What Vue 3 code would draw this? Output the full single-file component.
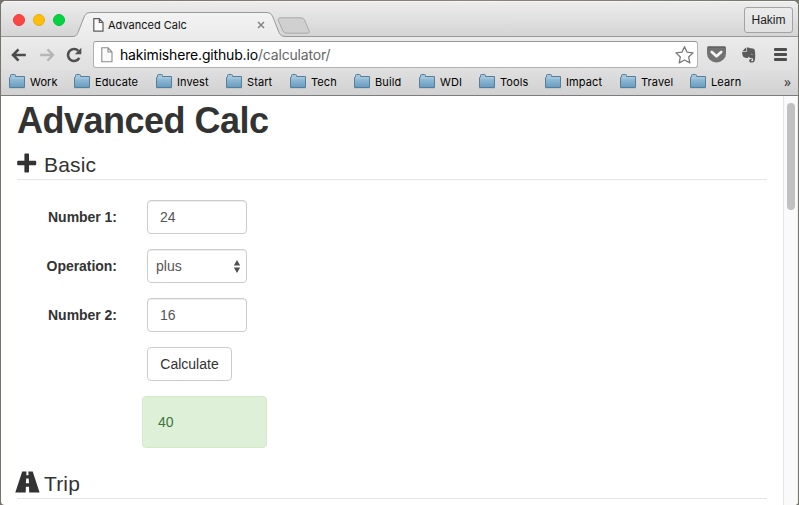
<script setup>
import { ref } from 'vue'

const bookmarks = [
  { name: 'Work', width: 65 },
  { name: 'Educate', width: 82 },
  { name: 'Invest', width: 70 },
  { name: 'Start', width: 64 },
  { name: 'Tech', width: 64 },
  { name: 'Build', width: 65 },
  { name: 'WDI', width: 60 },
  { name: 'Tools', width: 66 },
  { name: 'Impact', width: 75 },
  { name: 'Travel', width: 70 },
  { name: 'Learn', width: 60 },
]

const first = ref('24')
const second = ref('16')
const result = ref(40)

function calculate() {
  result.value = Number(first.value) + Number(second.value)
}
</script>

<template>
  <div class="desktop">
    <div class="window">
      <header class="strip">
        <div class="lights">
          <span class="light red"></span>
          <span class="light yellow"></span>
          <span class="light green"></span>
        </div>
        <div class="tab">
          <svg class="tab-shape" width="214" height="26" viewBox="0 0 214 26">
            <defs>
              <linearGradient id="tabfill" x1="0" y1="0" x2="0" y2="1">
                <stop offset="0" stop-color="#f3f3f3" />
                <stop offset="1" stop-color="#ebebeb" />
              </linearGradient>
            </defs>
            <path d="M0 26V24.500C4 24.500 5 23 6 20.500L12.500 4Q14 .5 18 .5H195Q199 .5 200.500 4L207 20.500C208 23 210 24.500 213 24.500V26Z" fill="url(#tabfill)" />
            <path d="M0 24.500C4 24.500 5 23 6 20.500L12.500 4Q14 .5 18 .5H195Q199 .5 200.500 4L207 20.500C208 23 210 24.500 213 24.500" fill="none" stroke="#999" />
          </svg>
          <svg class="tab-page" width="11" height="14" viewBox="0 0 11 14">
            <path d="M.8.700H6.300L10 4.400V13.200H.8ZM6.300.7V4.500H10" fill="#fafafa" stroke="#5c5c5c" stroke-width="1.200" />
          </svg>
          <span class="tab-title">Advanced Calc</span>
          <svg class="tab-close" width="8" height="8" viewBox="0 0 8 8">
            <path d="M1 1L7 7M7 1L1 7" stroke="#858585" stroke-width="1.500" />
          </svg>
        </div>
        <svg class="new-tab" width="34" height="18" viewBox="0 0 34 18">
          <path d="M4 .8H24Q26.500.8 27.500 3L32 13.500Q33 16.200 30.500 16.200H9.500Q7 16.200 6 14L1.300 3.500Q.5.8 4 .8Z" fill="#d0d0d0" stroke="#a8a8a8" />
        </svg>
        <button class="profile">Hakim</button>
      </header>

      <div class="toolbar">
        <svg class="nav back" width="16" height="14" viewBox="0 0 16 14">
          <path d="M7.500 1.300L2 7L7.500 12.700M2.300 7H14.800" fill="none" stroke="#4c4c4c" stroke-width="2.600" />
        </svg>
        <svg class="nav forward" width="16" height="14" viewBox="0 0 16 14">
          <path d="M8.500 1.300L14 7L8.500 12.700M13.700 7H1.200" fill="none" stroke="#b6b6b6" stroke-width="2.400" />
        </svg>
        <svg class="nav reload" width="16" height="16" viewBox="0 0 16 16">
          <path d="M12.300 3.800A6 6 0 1 0 13.300 10.800" fill="none" stroke="#505050" stroke-width="2.600" />
          <path d="M15.300.8V7.300H8.800Z" fill="#505050" />
        </svg>
        <div class="address">
          <svg class="url-page" width="12" height="16" viewBox="0 0 12 16">
            <path d="M.8.800H7L11 5V14.800H.8ZM7 .8V5H11" fill="#fafafa" stroke="#8b8b8b" stroke-width="1.100" />
          </svg>
          <span class="url">hakimishere.github.io<span>/calculator/</span></span>
          <svg class="star" width="19" height="18" viewBox="0 0 19 18">
            <path d="M9.500 .8L12.100 6.200L18 6.900L13.700 11L14.800 16.900L9.500 14L4.200 16.900L5.300 11L1 6.900L6.900 6.200Z" fill="#fff" stroke="#777" stroke-width="1.300" stroke-linejoin="round" />
          </svg>
        </div>
        <svg class="pocket" width="19" height="17" viewBox="0 0 19 17">
          <path d="M1 .5H18Q19 .5 19 1.500V7.500A9.500 9 0 0 1 0 7.500V1.500Q0 .5 1 .5Z" fill="#727272" />
          <path d="M1 1H18" stroke="#555" />
          <path d="M4.800 6L9.500 10.300L14.200 6" fill="none" stroke="#f5f5f5" stroke-width="2.700" stroke-linecap="round" stroke-linejoin="round" />
        </svg>
        <svg class="evernote" width="14" height="16" viewBox="0 0 14 16">
          <path d="M4 .5L.3 4.200H4Z" fill="#555" />
          <path d="M4.700.5C6 .2 7.500.5 8 1.300C9.500 1.200 12 1.700 12.600 2.700C13.400 5.500 13.500 11.500 12.600 14Q12 15.600 9.600 15.500C7.500 15.400 7.200 14.500 7.200 13.400Q7.200 11.700 9.700 11.800V13.200Q8.800 13.200 8.900 13.800C9.200 14.500 11.200 14.300 11.300 13.200Q11.400 11 9.300 11C7.500 11 7 10.300 6.700 9.500C6.200 11 5.300 11.200 3.600 10.800C1.200 10.600 0 8 .2 5H4.700Z" fill="#5b5b5b" />
          <path d="M9 7.500Q9.500 6 11 7.600Z" fill="#ddd" />
        </svg>
        <div class="menu"><i></i><i></i><i></i></div>
      </div>

      <nav class="bookmarks">
        <div v-for="b in bookmarks" :key="b.name" class="bookmark" :style="{ width: b.width + 'px' }">
          <svg width="16" height="15" viewBox="0 0 16 15">
            <defs>
              <linearGradient id="folder" x1="0" y1="0" x2="0" y2="1">
                <stop offset="0" stop-color="#a9cbe1" />
                <stop offset="1" stop-color="#669cc0" />
              </linearGradient>
            </defs>
            <path d="M.5 3.500H1.500V1.500Q1.500.5 2.500.5H5.500Q6.500.5 6.500 1.500V2.500H15.500V13.500H.5Z" fill="url(#folder)" stroke="#587d99" />
            <path d="M1 4H15" stroke="#a8cce2" />
            <path d="M0 14.500H16" stroke="#c2c5c8" />
          </svg>
          <span>{{ b.name }}</span>
        </div>
        <span class="more">»</span>
      </nav>

      <div class="viewport">
        <main>
          <h1>Advanced Calc</h1>
          <h2>
            <svg class="plus" width="20" height="20" viewBox="0 0 20 20">
              <path d="M8.200 .5H11.200Q12 .5 12 1.300V7.800H18.400Q19.200 7.800 19.200 8.600V11.400Q19.200 12.200 18.400 12.200H12V18.700Q12 19.500 11.200 19.500H8.200Q7.400 19.500 7.400 18.700V12.200H1Q.2 12.200 .2 11.400V8.600Q.2 7.800 1 7.800H7.400V1.300Q7.400 .5 8.200 .5Z" />
            </svg>
            <span class="basic">Basic</span>
          </h2>
          <form @submit.prevent="calculate">
            <div class="row">
              <label for="first">Number 1:</label>
              <input id="first" v-model="first" class="field" />
            </div>
            <div class="row">
              <label>Operation:</label>
              <div class="field select">
                <span>plus</span>
                <svg width="8" height="13" viewBox="0 0 8 13">
                  <path d="M4 0L7.200 5.500H.8ZM4 13L7.200 7.500H.8Z" fill="#505050" />
                </svg>
              </div>
            </div>
            <div class="row">
              <label for="second">Number 2:</label>
              <input id="second" v-model="second" class="field" />
            </div>
            <button class="calculate">Calculate</button>
            <div class="result">{{ result }}</div>
          </form>
          <h2 class="trip">
            <svg class="road" width="25" height="22" viewBox="0 0 25 22">
              <path fill-rule="evenodd" d="M7.200.5H11.500L11.300 4.200H13.500L13.300.5H17.700L24.600 21.500H14.200L14 15.800H10.900L10.700 21.500H.3ZM11.200 7.500L10.900 12.300H14L13.700 7.500Z" />
            </svg>
            <span>Trip</span>
          </h2>
        </main>
        <aside class="scrollbar"><div class="thumb"></div></aside>
      </div>
    </div>
  </div>
</template>

<style>
body { overflow: hidden; }
</style>

<style scoped>
* { box-sizing: border-box; }
.desktop {
  width: 799px;
  height: 505px;
  padding: 1px 1px 0;
  background: linear-gradient(90deg, #77726b, #8b8478 60%, #77776d);
  font-family: "Liberation Sans", Arial, sans-serif;
}
.window {
  width: 797px;
  height: 504px;
  overflow: hidden;
  display: flex;
  flex-direction: column;
  background: #fff;
  border-radius: 5px 5px 4px 4px;
}
.strip {
  flex: none;
  height: 36px;
  display: flex;
  align-items: flex-start;
  background: linear-gradient(#ececec, #d5d5d5);
  border-bottom: 1px solid #999;
  border-top: 1px solid #f6f6f6;
}
.lights { display: flex; gap: 8px; padding: 12px 0 0 12px; width: 74px; }
.light { width: 12px; height: 12px; border-radius: 50%; }
.red { background: #fc4644; border: 1px solid #e93d3b; }
.yellow { background: #fdbd0b; border: 1px solid #e9ad0b; }
.green { background: #05d343; border: 1px solid #08bd3c; }
.tab {
  position: relative;
  width: 208px;
  height: 26px;
  margin-top: 10px;
  display: flex;
  align-items: center;
  padding: 0 18px 0 18px;
}
.tab-shape { position: absolute; left: -3px; top: 0; }
.tab-page, .tab-title, .tab-close { position: relative; }
.tab-title {
  flex: 1;
  margin-left: 4px;
  font: 11px/14px Inter, sans-serif;
  letter-spacing: 0;
  color: #111;
}
.new-tab { margin: 15px 0 0 -6px; }
.profile {
  width: 49px;
  height: 26px;
  margin: 5px 5px 0 auto;
  padding: 0;
  border: 1px solid #a3a3a3;
  border-radius: 3px;
  background: linear-gradient(#ebebeb, #e1e1e1);
  font: 12px/24px "Liberation Sans", sans-serif;
  color: #1c1c1c;
}
.toolbar {
  flex: none;
  height: 33px;
  display: flex;
  align-items: center;
  padding: 2px 11px 0 10px;
  background: linear-gradient(#ebebeb, #e0e0e0);
}
.nav { flex: none; }
.forward { margin-left: 12px; }
.reload { margin-left: 11px; }
.address {
  width: 605px;
  height: 27px;
  margin-left: 11px;
  padding: 0 3px 0 7px;
  display: flex;
  align-items: center;
  background: #fff;
  border: 1px solid #b1b1b1;
  border-top-color: #999;
  border-radius: 3px;
}
.url {
  flex: 1;
  margin-left: 7px;
  font: 14px/20px Inter, sans-serif;
  letter-spacing: -0.17px;
  color: #000;
}
.url span { color: #666; letter-spacing: -0.17px; }
.pocket { margin-left: 9px; }
.evernote { margin-left: 16px; }
.menu { width: 13px; margin-left: auto; display: grid; gap: 2px; }
.menu i { height: 3px; border-radius: 1px; background: #4d4d4d; }
.bookmarks {
  flex: none;
  height: 26px;
  display: flex;
  align-items: center;
  padding: 0 7px 1px 8px;
  background: linear-gradient(#dfdfdf, #d1d1d1);
  border-bottom: 1px solid #7c7c7c;
}
.bookmark {
  flex: none;
  display: flex;
  align-items: center;
  gap: 5px;
  font: 11px/14px Inter, sans-serif;
  letter-spacing: 0.1px;
  color: #000;
}
.bookmark svg { margin-bottom: 1px; }
.more { margin-left: auto; font: 14px/14px "Open Sans", sans-serif; color: #333; }
.viewport { flex: 1; min-height: 0; display: flex; }
main { flex: 1; padding: 0 16px; overflow: hidden; color: #333; }
h1 { margin: 5px 0 0; font-size: 36px; line-height: 40px; font-weight: 700; letter-spacing: -0.5px; }
h2 {
  display: flex;
  align-items: center;
  height: 33px;
  margin: 6px 0 0;
  border-bottom: 1px solid #e5e5e5;
  font-size: 21px;
  font-weight: 400;
  line-height: 30px;
}
h2 svg { flex: none; fill: #333; }
h2 span { padding-top: 3px; letter-spacing: 0.15px; }
.basic { margin-left: 7px; }
.trip { margin-top: 18px; }
.road { margin: 0 4px 0 -2px; }
form { margin-top: 20px; display: flex; flex-direction: column; align-items: flex-start; }
.row { display: flex; align-items: center; height: 34px; margin-bottom: 15px; }
label { width: 100px; margin-right: 30px; text-align: right; font-size: 14px; font-weight: 700; letter-spacing: -0.03px; }
.field {
  width: 100px;
  height: 34px;
  padding: 6px 12px;
  border: 1px solid #ccc;
  border-radius: 4px;
  background: #fff;
  box-shadow: inset 0 1px 1px rgba(0, 0, 0, 0.075);
  font: 14px/20px "Liberation Sans", sans-serif;
  color: #555;
}
.select { display: flex; align-items: center; justify-content: space-between; padding: 0 5px 0 8px; }
.calculate {
  width: 85px;
  height: 34px;
  margin-left: 130px;
  padding: 0;
  border: 1px solid #ccc;
  border-radius: 4px;
  background: #fff;
  font: 14px/20px "Liberation Sans", sans-serif;
  color: #333;
}
.result {
  width: 125px;
  height: 52px;
  margin: 15px 0 0 125px;
  padding: 15px;
  border: 1px solid #d6e9c6;
  border-radius: 4px;
  background: #dff0d8;
  font-size: 14px;
  line-height: 20px;
  color: #3c763d;
}
.scrollbar {
  width: 15px;
  padding: 7px 0 0 3px;
  background: #fafafa;
  border-left: 1px solid #e7e7e7;
  border-right: 1px solid #ededed;
}
.thumb { width: 8px; height: 107px; border-radius: 4px; background: #c1c1c1; }
</style>
